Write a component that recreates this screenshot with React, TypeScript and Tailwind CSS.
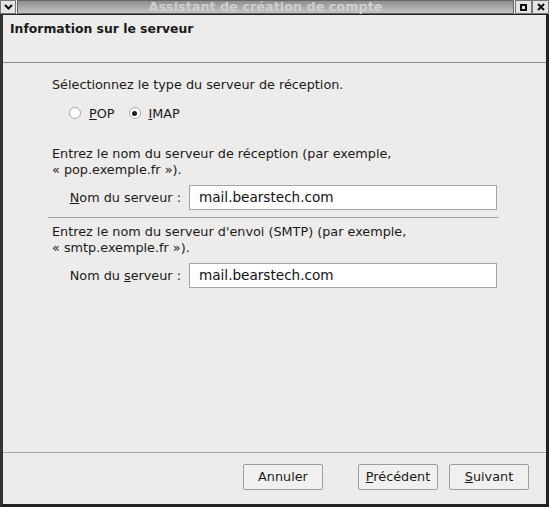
import React from 'react';

const font = { fontFamily: '"DejaVu Sans", "Liberation Sans", sans-serif' };

const Radio = ({ checked }: { checked?: boolean }) => (
  <span className="w-[12px] h-[12px] rounded-full border border-[#a8a8a8] bg-white flex items-center justify-center">
    {checked && <span className="w-[5px] h-[5px] rounded-full bg-[#1a1a1a]"></span>}
  </span>
);

const Field = ({ label }: { label: React.ReactNode }) => (
  <div className="flex items-center h-[25px] mt-[7px]">
    <div className="w-[137px] text-right pr-[8px] text-[12.8px] text-[#1a1a1a] whitespace-nowrap">{label}</div>
    <div className="w-[308px] h-[25px] bg-white border border-[#a5a5a0] flex items-center pl-[9px] text-[13.6px] text-[#111]">
      mail.bearstech.com
    </div>
  </div>
);

const Btn = ({ children, className = '' }: { children: React.ReactNode; className?: string }) => (
  <button className={`w-[80px] h-[26px] bg-[#f1f0ef] border border-[#9f9e9b] rounded-[2px] text-[12.8px] text-[#1a1a1a] flex items-center justify-center ${className}`}>
    {children}
  </button>
);

export default function App() {
  return (
    <div className="w-[549px] h-[507px] bg-[#edeceb] flex flex-col overflow-hidden" style={font}>
      {/* Title bar */}
      <div className="h-[15px] flex bg-[#ededed] border-b border-[#222]">
        <div className="w-[16px] h-[14px] border border-[#777] bg-[#e4e4e4] flex items-center justify-center">
          <svg width="9" height="6" viewBox="0 0 9 6">
            <path d="M1 1 L4.5 4.5 L8 1" stroke="#111" strokeWidth="2" fill="none" />
          </svg>
        </div>
        <div className="flex-1 ml-[1px] bg-gradient-to-b from-[#8f8f8f] to-[#c4c4c4] flex items-center justify-center border border-[#666]">
          <span className="text-[12.8px] font-bold text-[#cfcfcf] leading-none">Assistant de création de compte</span>
        </div>
        <div className="w-[17px] h-[14px] border border-[#777] bg-[#e4e4e4] flex items-center justify-center ml-[1px]">
          <span className="w-[7px] h-[7px] border-2 border-[#111]"></span>
        </div>
        <div className="w-[17px] h-[14px] border border-[#777] bg-[#e4e4e4] flex items-center justify-center">
          <svg width="8" height="8" viewBox="0 0 8 8">
            <path d="M1 1 L7 7 M7 1 L1 7" stroke="#111" strokeWidth="2" />
          </svg>
        </div>
      </div>

      {/* Window body */}
      <div className="flex-1 flex flex-col border-l-[3px] border-l-[#333] border-r-[3px] border-r-[#222] border-b-[3px] border-b-[#222]">
        <div className="h-[48px] border-b border-[#8e8d8a] pl-[7px] pt-[5px]">
          <div className="text-[12.4px] font-bold text-[#1a1a1a]">Information sur le serveur</div>
        </div>

        <div className="flex-1 pl-[49px] pr-[44px] pt-[12px] text-[12.8px] text-[#1a1a1a]">
          <div>Sélectionnez le type du serveur de réception.</div>
          <div className="flex items-center mt-[10px] ml-[17px] gap-[8px] h-[18px]">
            <Radio />
            <span className="mr-[6px]"><span className="underline">P</span>OP</span>
            <Radio checked />
            <span><span className="underline">I</span>MAP</span>
          </div>

          <div className="mt-[24px] leading-[16px]">
            <div>Entrez le nom du serveur de réception (par exemple,</div>
            <div>« pop.exemple.fr »).</div>
          </div>
          <Field label={<><span className="underline">N</span>om du serveur :</>} />

          <div className="h-px bg-[#a8a7a4] mt-[7px] -ml-[4px] w-[451px]"></div>

          <div className="mt-[6px] leading-[16px]">
            <div>Entrez le nom du serveur d'envoi (SMTP) (par exemple,</div>
            <div>« smtp.exemple.fr »).</div>
          </div>
          <Field label={<>Nom du <span className="underline">s</span>erveur :</>} />
        </div>

        <div className="h-[52px] border-t border-[#a8a7a4] flex items-start justify-end pt-[11px] pr-[17px]">
          <Btn>Annuler</Btn>
          <Btn className="ml-[35px]"><span><span className="underline">P</span>récédent</span></Btn>
          <Btn className="ml-[11px]"><span><span className="underline">S</span>uivant</span></Btn>
        </div>
      </div>
    </div>
  );
}
